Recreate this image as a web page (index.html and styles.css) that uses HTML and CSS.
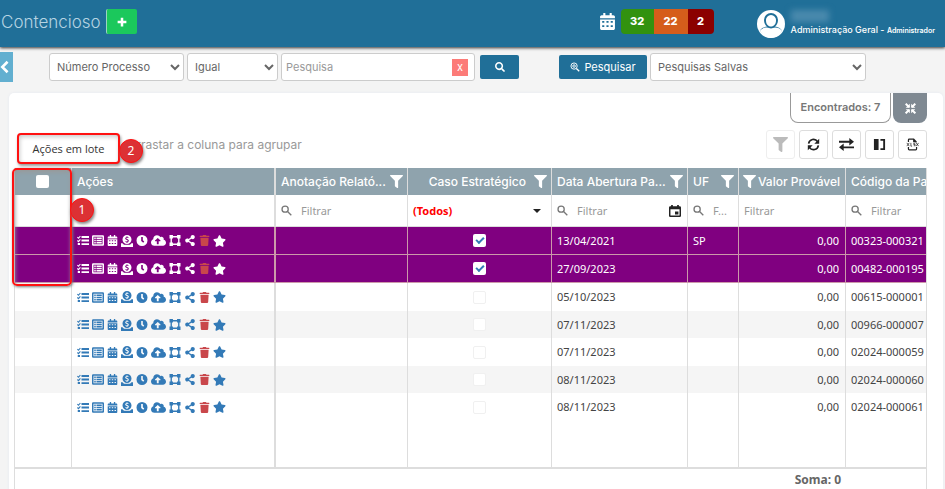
FILE: index.html
```html
<!DOCTYPE html>
<html lang="pt-BR">
<head>
<meta charset="utf-8">
<meta name="viewport" content="width=device-width, initial-scale=1">
<title>Contencioso</title>
<link rel="stylesheet" href="styles.css">
</head>
<body>
<svg class="sprite" aria-hidden="true">
  <symbol id="plus" viewBox="0 0 16 16"><path d="M6 1h4v5h5v4h-5v5H6v-5H1V6h5z"/></symbol>
  <symbol id="calendar" viewBox="0 0 448 512"><path fill-rule="evenodd" d="M0 464c0 26 22 48 48 48h352c26 0 48-22 48-48V192H0zM64 240h64v56H64zm128 0h64v56h-64zm128 0h64v56h-64zM64 368h64v56H64zm128 0h64v56h-64zm128 0h64v56h-64zM448 112v48H0v-48c0-26 22-48 48-48h48V12c0-7 5-12 12-12h40c7 0 12 5 12 12v52h128V12c0-7 5-12 12-12h40c7 0 12 5 12 12v52h48c26 0 48 22 48 48z"/></symbol>
  <symbol id="user" viewBox="0 0 28 28"><circle cx="14" cy="14" r="14"/><path class="cut" d="M14 3a7 7 0 0 1 7 7c0 3-1.500 5.500-3 6.500 3 .5 5.500 1.500 7 4A13 13 0 0 1 14 26 13 13 0 0 1 3 20.500c1.500-2.500 4-3.500 7-4C8.500 15.500 7 13 7 10a7 7 0 0 1 7-7z"/><path d="M14 5a5 5 0 0 1 5 5.500C19 14 17 16.500 14 16.500S9 14 9 10.500A5 5 0 0 1 14 5zM3 20.500c2-2 4-3 7-3l4 1 4-1c3 0 5 1 7 3A13 13 0 0 1 14 28 13 13 0 0 1 3 20.500z"/></symbol>
  <symbol id="search" viewBox="0 0 512 512"><path d="M505 442.700L405.300 343c-4.500-4.500-10.600-7-17-7H372c27.600-35.300 44-79.700 44-128C416 93.100 322.900 0 208 0S0 93.100 0 208s93.100 208 208 208c48.300 0 92.700-16.400 128-44v16.300c0 6.400 2.500 12.500 7 17l99.700 99.700c9.400 9.400 24.600 9.400 33.900 0l28.300-28.300c9.400-9.400 9.400-24.600.1-34zM208 336c-70.700 0-128-57.200-128-128 0-70.700 57.200-128 128-128 70.700 0 128 57.200 128 128 0 70.700-57.200 128-128 128z"/></symbol>
  <symbol id="search-plus" viewBox="0 0 16 16"><g fill="none" stroke="currentColor" stroke-width="1.500"><circle cx="6.500" cy="6.500" r="5"/><circle cx="6.500" cy="6.500" r="2"/></g><path d="M9.500 11l1.500-1.500 4.500 4.500-1.500 1.500z"/></symbol>
  <symbol id="lens" viewBox="0 0 16 16"><g fill="none" stroke="currentColor" stroke-width="1.900"><circle cx="6" cy="6" r="4.500"/><path d="M9.500 9.500L15 15"/></g></symbol>
  <symbol id="chevron" viewBox="0 0 10 16"><path d="M8.500 2L2.500 8l6 6" fill="none" stroke="currentColor" stroke-width="3"/></symbol>
  <symbol id="compress" viewBox="0 0 16 16"><path d="M1 1l5 5M15 1l-5 5M1 15l5-5M15 15l-5-5" stroke="currentColor" stroke-width="3"/><path d="M7 1v6H1zM9 1v6h6zM7 15V9H1zM9 15V9h6z"/></symbol>
  <symbol id="filter" viewBox="0 0 512 512"><path d="M488 0H24C3 0-8 26 7 41l185 185v206c0 8 4 15 10 20l80 56c16 11 38-1 38-20V226L505 41c15-15 4-41-17-41z"/></symbol>
  <symbol id="sync" viewBox="0 0 16 16"><g fill="none" stroke="currentColor" stroke-width="2"><path d="M2 7a6 6 0 0 1 11-2.500M14 9a6 6 0 0 1-11 2.500"/></g><path d="M15 1v6H9zM1 15V9h6z"/></symbol>
  <symbol id="swap" viewBox="0 0 16 14"><path d="M0 3h11V0l5 4-5 4V5H0zM16 9H5V6l-5 4 5 4v-3h11z"/></symbol>
  <symbol id="columns" viewBox="0 0 14 14"><path d="M1 1h5v12H1zM8 1h5v12H8v-2h3V3H8z"/></symbol>
  <symbol id="xlsx" viewBox="0 0 16 16"><path d="M3 5V2.500q0-1 1-1h5.500l3 3v1M3 11v2.500q0 1 1 1h8q1 0 1-1V11M9.500 1.500v3h3" fill="none" stroke="currentColor" stroke-width="1.500"/><path d="M1 6l3 4M4 6l-3 4M6 6v4h1.500M11.300 6.500H9.500v1.500h1.800v1.500H9.500M12.500 6l3 4M15.500 6l-3 4" fill="none" stroke="currentColor" stroke-width=".9"/></symbol>
  <symbol id="date" viewBox="0 0 14 14"><path fill-rule="evenodd" d="M2.500 0h2v1.500h5V0h2v1.500h1q1.500 0 1.500 1.500v9.500q0 1.500-1.500 1.500h-11Q0 14 0 12.500V3q0-1.500 1.500-1.500h1zM1.700 5v7.300h10.600V5zM7 7.500h4V11H7z"/></symbol>
  <symbol id="tasks" viewBox="0 0 16 14"><path d="M6 1h10v2.500H6zM6 5.800h10v2.500H6zM6 10.500h10V13H6zM1 10.300h3V13H1z"/><path d="M.5 2.500L2 4l2.500-3M.5 7L2 8.500l2.500-3" fill="none" stroke="currentColor" stroke-width="1.500"/></symbol>
  <symbol id="list" viewBox="0 0 16 14"><path fill-rule="evenodd" d="M1.500 0h13q1.500 0 1.500 1.500v11q0 1.500-1.500 1.500h-13Q0 14 0 12.500v-11Q0 0 1.500 0zM2 2v10h12V2z"/><path d="M3 3h2v2H3zm3 0h7v2H6zM3 6h2v2H3zm3 0h7v2H6zM3 9h2v2H3zm3 0h7v2H6z"/></symbol>
  <symbol id="donate" viewBox="0 0 16 16"><path fill-rule="evenodd" d="M8 0a6 6 0 1 1 0 12A6 6 0 0 1 8 0zM7.400 1.500v1C5.500 2.800 5 5 6.500 6l2 1c1 .7.3 1.600-1 1.500L6 8v1.300l1.400.4v1h1.200v-1C10.800 9.200 11 7 9.500 6l-2-1c-.7-.6-.3-1.300.7-1.300L10 4V2.900l-1.400-.4v-1z"/><path d="M0 11h2l2 2h8l2-2h2v5H0z"/></symbol>
  <symbol id="clock" viewBox="0 0 16 16"><path fill-rule="evenodd" d="M8 0a8 8 0 1 1 0 16A8 8 0 0 1 8 0zM6.800 3v5.700l3 2.500 1.500-1.900L9.200 7.700V3z"/></symbol>
  <symbol id="cloud" viewBox="0 32 640 448"><path d="M537.600 226.600c4.100-10.700 6.400-22.400 6.400-34.600 0-53-43-96-96-96-19.700 0-38.100 6-53.300 16.200C367 64.200 315.300 32 256 32c-88.400 0-160 71.600-160 160 0 2.700.1 5.400.2 8.100C40.200 219.800 0 273.200 0 336c0 79.500 64.500 144 144 144h368c70.700 0 128-57.300 128-128 0-61.900-44-113.600-102.400-125.400zM393.400 288H328v112c0 8.800-7.200 16-16 16h-48c-8.800 0-16-7.200-16-16V288h-65.400c-14.300 0-21.400-17.200-11.300-27.300l105.400-105.400c6.200-6.200 16.400-6.200 22.600 0l105.400 105.400c10.100 10.100 2.900 27.300-11.300 27.300z"/></symbol>
  <symbol id="polygon" viewBox="0 0 16 16"><path fill-rule="evenodd" d="M0 0h5v1.500h6V0h5v5h-1.500v6H16v5h-5v-1.500H5V16H0v-5h1.500V5H0zM5 3.500V5H3.500v6H5v1.500h6V11h1.500V5H11V3.500z"/></symbol>
  <symbol id="share" viewBox="0 0 448 512"><path d="M352 320c-23 0-43 8-60 21l-102-64a97 97 0 0 0 0-42l102-64c17 13 37 21 60 21 53 0 96-43 96-96S405 0 352 0s-96 43-96 96c0 7 1 14 2 21l-102 64c-17-13-37-21-60-21-53 0-96 43-96 96s43 96 96 96c23 0 43-8 60-21l102 64a96 96 0 0 0-2 21c0 53 43 96 96 96s96-43 96-96-43-96-96-96z"/></symbol>
  <symbol id="trash" viewBox="0 0 448 512"><path d="M432 32H312l-9-19a24 24 0 0 0-22-13H167a24 24 0 0 0-22 13l-9 19H16A16 16 0 0 0 0 48v32a16 16 0 0 0 16 16h416a16 16 0 0 0 16-16V48a16 16 0 0 0-16-16zM53 467a48 48 0 0 0 48 45h246a48 48 0 0 0 48-45l21-339H32z"/></symbol>
  <symbol id="star" viewBox="0 0 576 512"><path d="M259.300 17.800L194 150.200 47.900 171.500c-26.200 3.800-36.700 36.100-17.700 54.600l105.700 103-25 145.500c-4.500 26.300 23.200 46 46.400 33.700L288 439.600l130.700 68.700c23.200 12.200 50.900-7.400 46.400-33.700l-25-145.500 105.700-103c19-18.500 8.500-50.800-17.700-54.600L382 150.200 316.700 17.800c-11.700-23.600-45.600-23.900-57.400 0z"/></symbol>
</svg>

<header class="topbar">
  <h1 class="title">Contencioso</h1>
  <button class="add" aria-label="Adicionar"><svg><use href="#plus"/></svg></button>
  <div class="agenda">
    <svg class="agenda-icon"><use href="#calendar"/></svg>
    <div class="counts"><a href="#" class="ok">32</a><a href="#" class="warn">22</a><a href="#" class="late">2</a></div>
  </div>
  <div class="account">
    <svg class="avatar"><use href="#user"/></svg>
    <div class="account-text">
      <span class="hidden-name"></span>
      <span class="role">Administração Geral - <small>Administrador</small></span>
    </div>
  </div>
</header>

<form class="searchbar">
  <button type="button" class="drawer" aria-label="Abrir menu"><svg><use href="#chevron"/></svg></button>
  <select class="field-kind" aria-label="Campo"><option>Número Processo</option></select>
  <select class="field-op" aria-label="Operador"><option>Igual</option></select>
  <div class="query">
    <input type="text" placeholder="Pesquisa" aria-label="Pesquisa">
    <button type="button" class="clear" aria-label="Limpar">x</button>
  </div>
  <button type="button" class="go" aria-label="Buscar"><svg><use href="#search"/></svg></button>
  <button type="button" class="advanced"><svg><use href="#search-plus"/></svg>Pesquisar</button>
  <select class="saved" aria-label="Pesquisas Salvas"><option>Pesquisas Salvas</option></select>
</form>

<main class="card">
  <div class="tabs">
    <span class="found">Encontrados: 7</span>
    <button class="compress" aria-label="Reduzir"><svg><use href="#compress"/></svg></button>
  </div>
  <div class="toolbar">
    <div class="batch">
      <button class="batch-button">Ações em lote</button>
      <span class="marker marker-two">2</span>
    </div>
    <span class="group-hint">Arrastar a coluna para agrupar</span>
    <div class="tools">
      <button disabled aria-label="Limpar filtro"><svg class="big"><use href="#filter"/></svg></button>
      <button aria-label="Atualizar"><svg><use href="#sync"/></svg></button>
      <button aria-label="Alternar"><svg class="wide"><use href="#swap"/></svg></button>
      <button aria-label="Colunas"><svg><use href="#columns"/></svg></button>
      <button aria-label="Exportar"><svg><use href="#xlsx"/></svg></button>
    </div>
  </div>
  <div class="grid">
    <table>
      <colgroup><col class="c-check"><col class="c-actions"><col class="c-note"><col class="c-case"><col class="c-date"><col class="c-uf"><col class="c-value"><col></colgroup>
      <thead>
        <tr class="heads">
          <th class="center"><input type="checkbox" class="tick" aria-label="Selecionar todos"></th>
          <th>Ações</th>
          <th><div class="head"><span>Anotação Relató...</span><svg><use href="#filter"/></svg></div></th>
          <th><div class="head end"><span>Caso Estratégico</span><svg><use href="#filter"/></svg></div></th>
          <th><div class="head"><span>Data Abertura Pa...</span><svg><use href="#filter"/></svg></div></th>
          <th><div class="head"><span>UF</span><svg><use href="#filter"/></svg></div></th>
          <th><div class="head tight"><svg><use href="#filter"/></svg><span>Valor Provável</span></div></th>
          <th>Código da Pa</th>
        </tr>
        <tr class="filters">
          <td></td>
          <td></td>
          <td><label class="filter"><svg><use href="#lens"/></svg><input placeholder="Filtrar" aria-label="Filtrar anotação"></label></td>
          <td><button class="all">(Todos)<i></i></button></td>
          <td><label class="filter"><svg><use href="#lens"/></svg><input placeholder="Filtrar" aria-label="Filtrar data"><svg class="date"><use href="#date"/></svg></label></td>
          <td><label class="filter"><svg><use href="#lens"/></svg><input placeholder="F..." aria-label="Filtrar UF"></label></td>
          <td><label class="filter"><input placeholder="Filtrar" aria-label="Filtrar valor"></label></td>
          <td><label class="filter"><svg><use href="#lens"/></svg><input placeholder="Filtrar" aria-label="Filtrar código"></label></td>
        </tr>
      </thead>
      <tbody id="rows"></tbody>
    </table>
    <div class="summary">Soma: 0</div>
    <div class="outline"></div>
    <span class="marker marker-one">1</span>
  </div>
</main>
<script src="app.js"></script>
</body>
</html>
```
FILE: app.js
```js
const actions = [
  ["tasks", "Tarefas"], ["list", "Detalhes"], ["calendar", "Agenda"],
  ["donate", "Valores"], ["clock", "Histórico"], ["cloud", "Enviar"],
  ["polygon", "Vínculos"], ["share", "Compartilhar"], ["trash", "Excluir"], ["star", "Favorito"]
];
const records = [
  ["13/04/2021", "SP", "00323-000321", true],
  ["27/09/2023", "", "00482-000195", true],
  ["05/10/2023", "", "00615-000001", false],
  ["07/11/2023", "", "00966-000007", false],
  ["07/11/2023", "", "02024-000059", false],
  ["08/11/2023", "", "02024-000060", false],
  ["08/11/2023", "", "02024-000061", false]
];
const buttons = actions.map(([id, label]) =>
  `<button class="${id}" aria-label="${label}"><svg><use href="#${id}"/></svg></button>`).join("");

document.getElementById("rows").innerHTML = records.map(([date, uf, code, strategic]) => `
  <tr class="${strategic ? "strategic" : ""}">
    <td></td>
    <td><div class="actions">${buttons}</div></td>
    <td></td>
    <td class="center"><input type="checkbox" class="tick" aria-label="Caso estratégico" ${strategic ? "checked" : "disabled"}></td>
    <td>${date}</td><td>${uf}</td><td class="right">0,00</td><td>${code}</td>
  </tr>`).join("") + `<tr class="filler">${"<td></td>".repeat(8)}</tr>`;
```
FILE: styles.css
```css
* { box-sizing: border-box; }
body {
  margin: 0;
  background: #f4f4f4;
  color: #444;
  font: 11px/16px Inter, "Open Sans", sans-serif;
  overflow: hidden;
}
svg { fill: currentColor; display: block; flex: none; }
.sprite { position: absolute; width: 0; height: 0; }
button, input, select { font: inherit; color: inherit; margin: 0; }
button { border: 0; padding: 0; background: none; display: flex; align-items: center; justify-content: center; }

.topbar {
  display: flex;
  align-items: center;
  height: 47px;
  padding: 0 10px 4px 1px;
  background: #206f98;
  color: #fff;
  box-shadow: 0 1px 3px #333;
}
.title { margin: 0 5px 0 0; font-size: 17px; line-height: 24px; font-weight: 300; color: #b5d3e2; }
.add { width: 31px; height: 25px; background: #1bc85c; border-left: 1px solid #9bd5c0; border-radius: 2px; }
.add svg { width: 10px; height: 10px; }
.agenda { display: flex; align-items: center; gap: 6px; margin-left: auto; }
.agenda-icon { width: 15px; height: 17px; }
.counts { display: flex; border-radius: 4px; overflow: hidden; font-weight: 800; line-height: 25px; text-align: center; }
.counts a { color: #fff; text-decoration: none; }
.ok { width: 33px; background: #32920f; }
.warn { width: 34px; background: #d55d1b; }
.late { width: 26px; background: #8b0000; }
.account { display: flex; align-items: center; gap: 6px; margin-left: 43px; padding-top: 4px; }
.avatar { width: 28px; height: 28px; }
.cut { fill: #206f98; }
.account-text { display: flex; flex-direction: column; gap: 2px; }
.hidden-name { width: 38px; height: 12px; background: #4a8aad; filter: blur(3px); }
.role { font-size: 9px; line-height: 12px; font-weight: 500; white-space: nowrap; }
.role small { font-size: 7px; font-weight: 600; }

.searchbar { display: flex; align-items: center; height: 46px; padding: 0 79px 6px 0; color: #666; }
.drawer { width: 13px; height: 30px; margin-right: 36px; background: #62afd0; color: #fff; justify-content: flex-start; }
.drawer svg { width: 9px; height: 14px; }
.searchbar select, .query { height: 28px; border: 1px solid #ccc; border-radius: 3px; background: #fff; }
.searchbar select { padding: 0 0 0 3px; }
.field-kind { width: 135px; margin-right: 3px; }
.field-op { width: 91px; margin-right: 3px; }
.query { display: flex; align-items: center; width: 194px; padding: 0 6px 0 4px; }
.query input { flex: 1; min-width: 0; border: 0; padding: 0; outline: 0; background: none; }
.query input::placeholder { color: #999; }
.clear { width: 16px; height: 17px; background: #fc7b78; color: #fff; }
.go, .advanced { height: 24px; background: #206f98; color: #fff; border-radius: 2px; }
.go { width: 39px; margin-left: 5px; }
.go svg { width: 10px; height: 10px; }
.advanced { width: 88px; margin: 0 3px 0 40px; gap: 4px; }
.advanced svg { width: 10px; height: 10px; }
.saved { flex: 1; max-width: 216px; }

.card {
  margin: 0 2px 0 9px;
  padding: 0 16px 0 5px;
  min-height: 400px;
  background: #fff;
  border-radius: 5px 5px 0 0;
  box-shadow: 0 0 3px #e3e7f0;
}
.tabs { display: flex; justify-content: flex-end; gap: 2px; height: 30px; }
.found {
  width: 101px;
  border: 1px solid #999;
  border-top: 0;
  border-radius: 0 0 8px 8px;
  color: #777;
  font-weight: 600;
  line-height: 29px;
  text-align: center;
}
.compress { width: 34px; background: #7f8992; color: #fff; border-radius: 0 0 8px 8px; }
.compress svg { width: 11px; height: 11px; }
.toolbar { display: flex; align-items: flex-start; height: 45px; padding-top: 7px; }
.batch { position: relative; margin: 3px 0 0 3px; }
.batch-button {
  width: 103px;
  height: 31px;
  border: 2px solid #f11;
  border-radius: 4px;
  background: #fff;
  box-shadow: 1px 2px 3px #999, inset 1px 2px 4px #ccc;
  color: #333;
  font-family: "Open Sans", sans-serif;
}
.group-hint { margin-left: 8px; font-size: 12px; line-height: 29px; color: #999; }
.tools { display: flex; gap: 4px; margin-left: auto; }
.tools button { width: 29px; height: 29px; border: 1px solid #ddd; border-radius: 3px; color: #222; }
.tools button:disabled { color: #bbb; border-color: #eee; }
.tools svg { width: 13px; height: 13px; }
.tools .wide, .tools .big { width: 15px; height: 15px; }
.marker {
  position: absolute;
  width: 24px;
  height: 24px;
  border: 1px solid #f11;
  border-radius: 50%;
  background: #dc3134;
  box-shadow: 1px 2px 3px #888;
  color: #fff;
  font: 12px/22px "Noto Sans", sans-serif;
  text-align: center;
}
.marker-two { left: 102px; top: 6px; }
.marker-one { left: 55px; top: 30px; }

.grid { position: relative; border: solid #ddd; border-width: 0 1px; font-family: "Noto Sans", sans-serif; }
table { width: 100%; border-collapse: separate; border-spacing: 0; table-layout: fixed; }
.c-check { width: 57px; }
.c-actions { width: 204px; }
.c-note { width: 132px; }
.c-case { width: 144px; }
.c-date { width: 136px; }
.c-uf { width: 51px; }
.c-value { width: 107px; }
th, td { padding: 0 6px 0 5px; border-right: 1px solid #ddd; white-space: nowrap; overflow: hidden; text-align: left; }
th:last-child, td:last-child { border-right: 0; padding-right: 0; }
th:nth-child(2), td:nth-child(2) { border-right-width: 2px; }
.heads th { height: 27px; background: #8fa3ad; color: #fff; font-family: Inter, sans-serif; font-size: 12px; font-weight: 500; }
.head { display: flex; align-items: center; justify-content: space-between; gap: 2px; margin-right: -2px; }
.head svg { width: 13px; height: 13px; }
.end { justify-content: flex-end; gap: 8px; }
.tight { margin: 0 -1px; }
.filters td { height: 32px; border-bottom: 1px solid #ddd; }
.filter { display: flex; align-items: center; gap: 9px; color: #777; }
.filter svg { width: 11px; height: 11px; }
.filter input { flex: 1; min-width: 0; padding: 0; border: 0; outline: 0; background: none; }
.filter input::placeholder { color: #999; }
.filter .date { width: 12px; height: 12px; color: #222; }
.all { width: 100%; justify-content: space-between; padding-right: 4px; color: #f00; font-weight: 700; }
.all i { border: solid transparent; border-width: 4px 4px 0; border-top-color: #222; }

tbody td { height: 28px; }
tbody tr:nth-child(even) td { height: 27px; background: #f5f5f5; }
tbody tr.strategic td { height: 28px; background: #800080; color: #fff; border-bottom: 1px solid #c9a; border-right-color: #c9a; }
tbody tr.filler td { height: 48px; background: #fff; border-bottom: 2px solid #ddd; }
.center { text-align: center; }
.right { text-align: right; }
.tick { appearance: none; display: block; width: 13px; height: 13px; margin: 0 auto; border-radius: 2px; background: #fff; }
.tick:disabled { border: 1px solid #f0f0f0; }
.tick:checked { padding: 3px; }
.tick:checked::after {
  content: "";
  display: block;
  box-sizing: border-box;
  width: 8px;
  height: 5px;
  border: solid #337ab7;
  border-width: 0 0 2px 2px;
  transform: rotate(-45deg);
}
.actions { display: flex; align-items: center; gap: 3px; color: #337ab7; }
.strategic .actions { color: #fff; }
.actions svg { width: 12px; height: 11px; }
.actions .calendar svg { width: 11px; }
.actions .donate svg { height: 12px; }
.actions .cloud svg { width: 15px; }
.actions .trash svg { width: 11px; }
.actions .star svg { width: 13px; height: 12px; }
.actions .trash, .strategic .actions .trash { color: #c9474b; }
.summary { padding-right: 85px; font-size: 12px; line-height: 22px; text-align: right; font-weight: 700; color: #666; }
.outline {
  position: absolute;
  left: -3px;
  top: 0;
  width: 60px;
  height: 118px;
  border: 2px solid #f11;
  border-radius: 5px;
  box-shadow: 1px 1px 3px #777, inset 1px 2px 4px #999;
}
```
